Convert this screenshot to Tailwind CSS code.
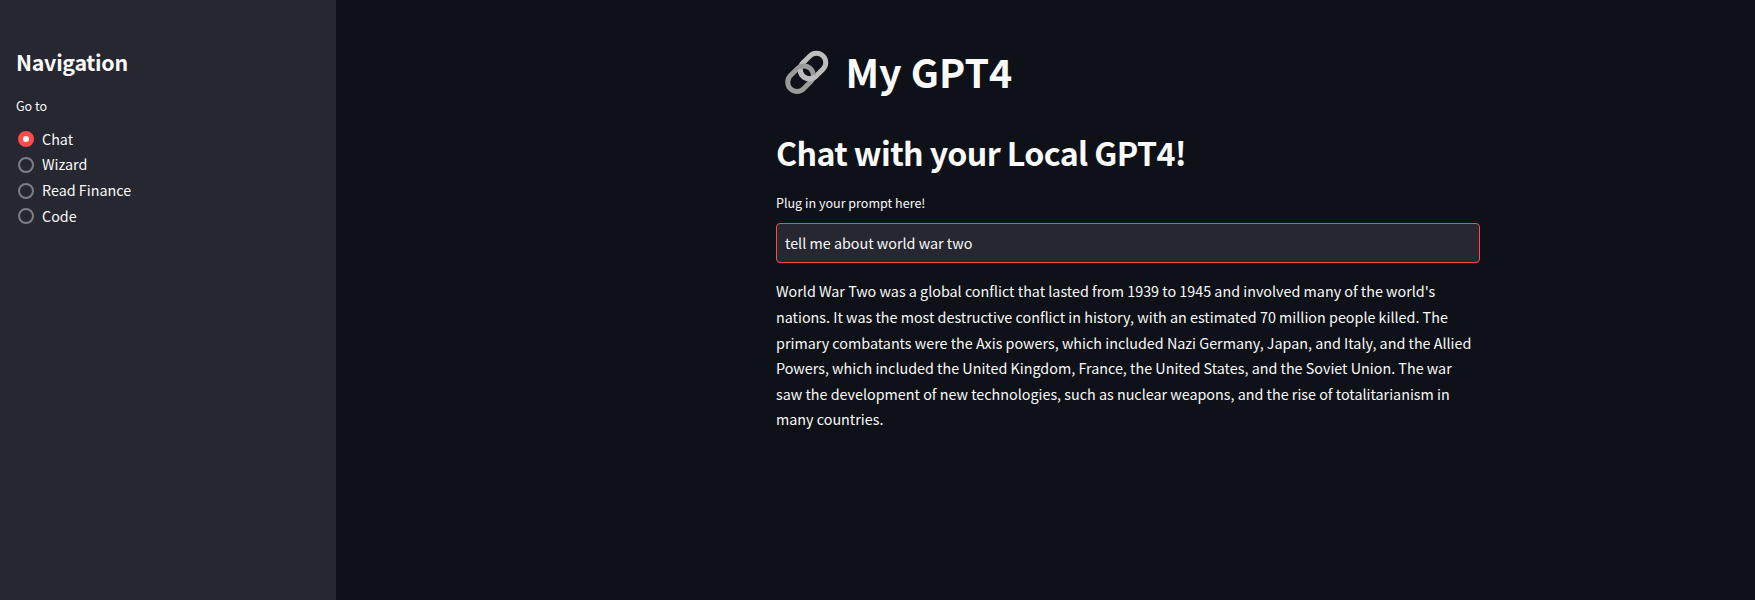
<!DOCTYPE html>
<html lang="en">
<head>
<meta charset="utf-8">
<title>My GPT4</title>
<script src="https://cdn.jsdelivr.net/npm/@tailwindcss/browser@4"></script>
</head>
<body class="flex h-[600px] overflow-hidden bg-[#0e1117] text-[#fafafa] font-['Noto_Sans_CJK_SC','Noto_Sans',sans-serif] text-[14.33px] leading-[25.6px]">
<aside class="w-[336px] shrink-0 bg-[#262730] px-4 pt-[47px]">
  <h2 class="text-[21.4px] leading-[29px] font-bold tracking-[-0.28px]">Navigation</h2>
  <p class="mt-[19px] text-[12.53px] leading-[22px]">Go to</p>
  <div class="mt-[9px] flex flex-col">
    <label class="flex h-[25.6px] items-center gap-2 pl-0.5"><span class="mt-[1.2px] flex size-4 items-center justify-center rounded-full bg-[#ff4b4b]"><span class="size-1.5 rounded-full bg-[#fafafa]"></span></span>Chat</label>
    <label class="flex h-[25.6px] items-center gap-2 pl-0.5"><span class="mt-[1.2px] size-4 rounded-full border-2 border-[#7d7e84]"></span><span class="mb-[1.4px]">Wizard</span></label>
    <label class="flex h-[25.6px] items-center gap-2 pl-0.5"><span class="mt-[1.2px] size-4 rounded-full border-2 border-[#7d7e84]"></span>Read Finance</label>
    <label class="flex h-[25.6px] items-center gap-2 pl-0.5"><span class="mt-[1.2px] size-4 rounded-full border-2 border-[#7d7e84]"></span>Code</label>
  </div>
</aside>
<main class="grow pt-11">
  <div class="ml-[440px] w-[704px] whitespace-nowrap">
    <h1 class="flex h-[53px] text-[39.4px] leading-[53px] font-bold">
      <svg class="ml-[8.5px] mt-[6px] mr-[15px] h-[46px] w-[46px] shrink-0" viewBox="0 0 46 46" fill="none" stroke-width="5">
        <rect x="-14.2" y="-9.3" width="28.4" height="18.6" rx="9.3" transform="translate(28 16) rotate(-45)" stroke="#bdbdbd"/>
        <rect x="-14.2" y="-9.3" width="28.4" height="18.6" rx="9.3" transform="translate(15.5 28.7) rotate(-45)" stroke="#9a9a9a"/>
        <path d="M15.2 19.5 A9.3 9.3 0 0 0 31.1 26.1" stroke="#bdbdbd"/>
      </svg>
      <span>My GPT4</span>
    </h1>
    <h2 class="mt-[34px] text-[32.2px] leading-[43px] font-bold tracking-[-0.63px]">Chat with your Local GPT4!</h2>
    <label class="mt-[18px] block text-[12.56px] leading-[22px]">Plug in your prompt here!</label>
    <div class="mt-[9px] flex h-10 items-center rounded border border-[#ff4b4b] bg-[#262730] px-2">tell me about world war two</div>
    <p class="mt-[15.4px]">World War Two was a global conflict that lasted from 1939 to 1945 and involved many of the world's<br>nations. It was the most destructive conflict in history, with an estimated 70 million people killed. The<br>primary combatants were the Axis powers, which included Nazi Germany, Japan, and Italy, and the Allied<br>Powers, which included the United Kingdom, France, the United States, and the Soviet Union. The war<br>saw the development of new technologies, such as nuclear weapons, and the rise of totalitarianism in<br>many countries.</p>
  </div>
</main>
</body>
</html>
